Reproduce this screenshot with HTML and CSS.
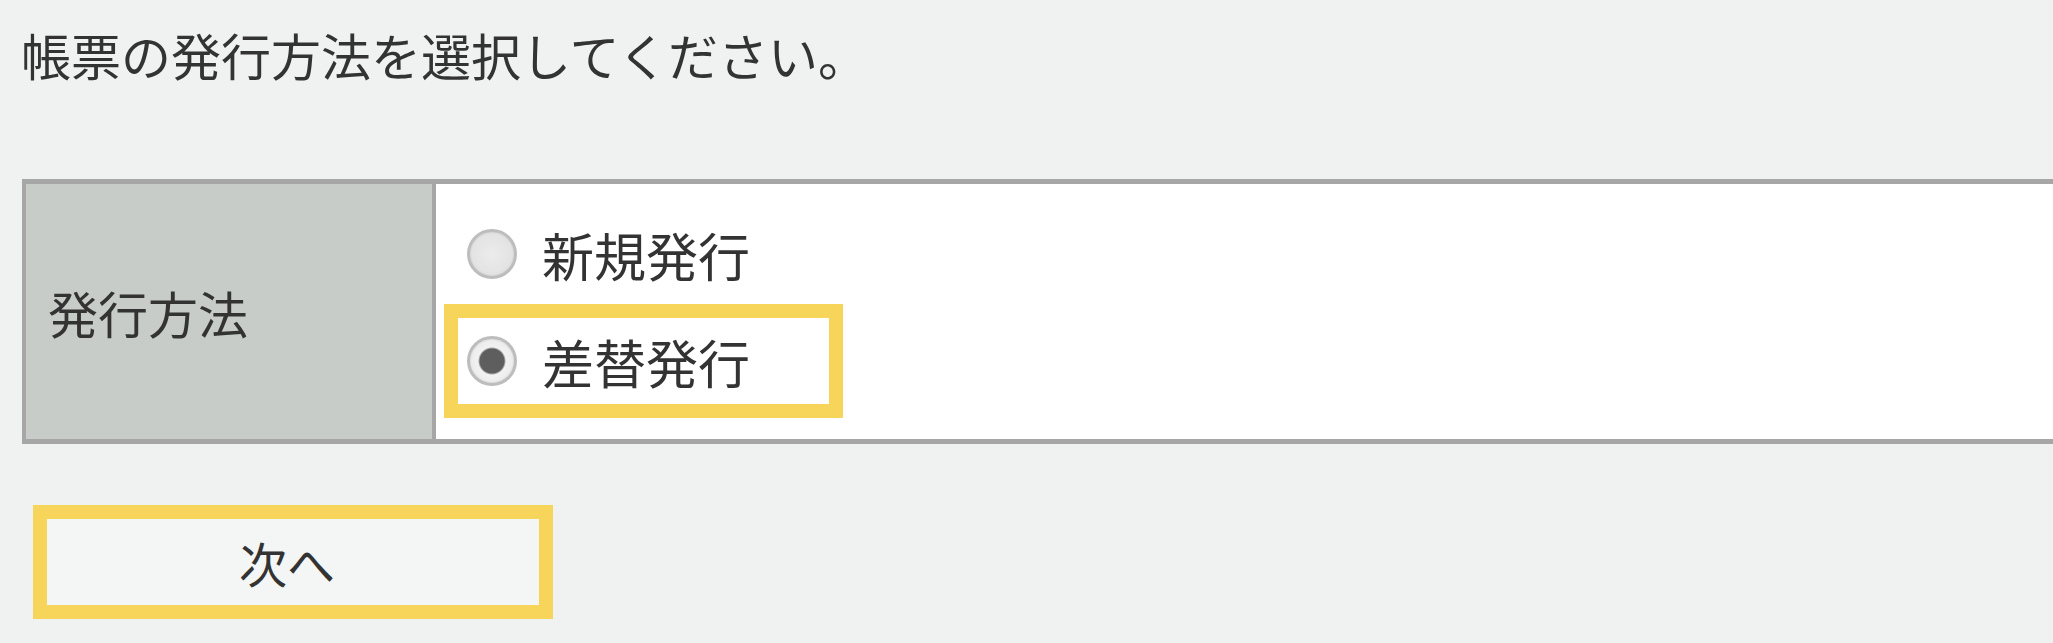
FILE: index.html
```html
<!DOCTYPE html>
<html lang="ja">
<head>
    <meta charset="UTF-8">
    <meta name="viewport" content="width=device-width, initial-scale=1.0">
    <title>帳票の発行方法</title>
    <link rel="stylesheet" href="styles.css">
</head>
<body>

<div class="page">
    <p class="lead">帳票の発行方法を選択してください。</p>

    <table class="form-table">
        <tr>
            <th>発行方法</th>
            <td>
                <label class="option">
                    <input type="radio" name="issue" value="new">
                    <span>新規発行</span>
                </label>
                <label class="option highlight">
                    <input type="radio" name="issue" value="replace" checked>
                    <span>差替発行</span>
                </label>
            </td>
        </tr>
    </table>

    <button class="next highlight">次へ</button>
</div>

</body>
</html>
```

FILE: styles.css
```css
html, body {
    min-height: 100%;
}
body {
    margin: 0;
    background: #f0f2f1;
    font-family: "Noto Sans CJK JP", "Liberation Sans", sans-serif;
    color: #333;
    overflow: hidden;
}
.page {
    padding: 0 0 60px 21px;
}
.lead {
    margin: 0;
    padding-top: 24px;
    font-size: 50px;
    line-height: 60px;
    height: 155px;
}
.form-table {
    margin-left: 1px;
    width: 2100px;
    border-collapse: collapse;
    border-top: 5px solid #a6a6a6;
    border-bottom: 5px solid #a6a6a6;
    border-left: 4px solid #a6a6a6;
}
.form-table th {
    width: 384px;
    padding: 0 0 0 22px;
    background: #c8ccc8;
    border-right: 4px solid #a6a6a6;
    font-weight: normal;
    font-size: 50px;
    text-align: left;
    vertical-align: middle;
}
.form-table td {
    background: #fff;
    padding: 27px 0 35px 22px;
}
.option {
    display: flex;
    align-items: center;
    width: 362px;
    height: 86px;
    padding-left: 9px;
    font-size: 52px;
}
.option + .option {
    margin-top: 21px;
}
.option input {
    appearance: none;
    -webkit-appearance: none;
    margin: 0 25px 0 0;
    width: 50px;
    height: 50px;
    border-radius: 50%;
    border: 3px solid #bdbdbd;
    background: radial-gradient(circle, #ececec 0%, #e2e2e2 70%, #d6d6d6 100%);
    box-sizing: border-box;
    box-shadow: inset 0 0 2px rgba(0, 0, 0, 0.15);
}
.option input:checked {
    background: radial-gradient(circle, #5e5e5e 0, #5e5e5e 12px, #f2f2f2 14px, #e4e4e4 100%);
}
.highlight {
    outline: 14px solid #f7d55b;
}
.next {
    display: block;
    margin: 75px 0 0 26px;
    width: 492px;
    height: 86px;
    border: none;
    background: #f4f6f5;
    font-family: "Noto Sans CJK JP", sans-serif;
    font-size: 48px;
    color: #333;
    padding: 0 12px 0 0;
}
```
